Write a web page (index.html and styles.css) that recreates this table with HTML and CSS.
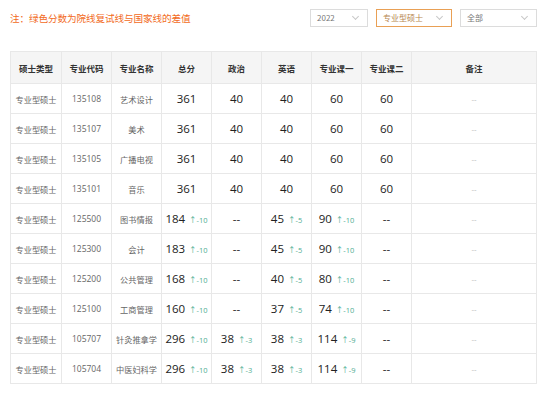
FILE: index.html
```html
<!DOCTYPE html>
<html lang="zh-CN">
<head>
  <meta charset="UTF-8" />
  <title>复试分数线</title>
  <link rel="stylesheet" href="styles.css">
</head>
<body>
  <div class="page">
    <div class="top-bar">
      <p class="notice">注：绿色分数为院线复试线与国家线的差值</p>
      <div class="filters">
        <div class="select year">2022<span class="arrow"></span></div>
        <div class="select type active">专业型硕士<span class="arrow"></span></div>
        <div class="select all">全部<span class="arrow"></span></div>
      </div>
    </div>

    <table class="score-table">
      <colgroup>
        <col class="c-sm"><col class="c-sm"><col class="c-sm"><col class="c-sm"><col class="c-sm">
        <col class="c-sm"><col class="c-sm"><col class="c-sm"><col>
      </colgroup>
      <thead>
        <tr>
          <th>硕士类型</th><th>专业代码</th><th>专业名称</th><th>总分</th><th>政治</th>
          <th>英语</th><th>专业课一</th><th>专业课二</th><th>备注</th>
        </tr>
      </thead>
      <tbody id="rows"></tbody>
    </table>
  </div>

  <script>
    const rows = [
      { code: "135108", name: "艺术设计", total: ["361"], pol: ["40"], eng: ["40"], s1: ["60"], s2: "60" },
      { code: "135107", name: "美术", total: ["361"], pol: ["40"], eng: ["40"], s1: ["60"], s2: "60" },
      { code: "135105", name: "广播电视", total: ["361"], pol: ["40"], eng: ["40"], s1: ["60"], s2: "60" },
      { code: "135101", name: "音乐", total: ["361"], pol: ["40"], eng: ["40"], s1: ["60"], s2: "60" },
      { code: "125500", name: "图书情报", total: ["184", "↑-10"], pol: null, eng: ["45", "↑-5"], s1: ["90", "↑-10"], s2: "--" },
      { code: "125300", name: "会计", total: ["183", "↑-10"], pol: null, eng: ["45", "↑-5"], s1: ["90", "↑-10"], s2: "--" },
      { code: "125200", name: "公共管理", total: ["168", "↑-10"], pol: null, eng: ["40", "↑-5"], s1: ["80", "↑-10"], s2: "--" },
      { code: "125100", name: "工商管理", total: ["160", "↑-10"], pol: null, eng: ["37", "↑-5"], s1: ["74", "↑-10"], s2: "--" },
      { code: "105707", name: "针灸推拿学", total: ["296", "↑-10"], pol: ["38", "↑-3"], eng: ["38", "↑-3"], s1: ["114", "↑-9"], s2: "--" },
      { code: "105704", name: "中医妇科学", total: ["296", "↑-10"], pol: ["38", "↑-3"], eng: ["38", "↑-3"], s1: ["114", "↑-9"], s2: "--" }
    ];

    function score(v) {
      if (!v) return `<td class="num">--</td>`;
      const diff = v[1] ? `<span class="diff">${v[1]}</span>` : "";
      return `<td class="num">${v[0]}${diff}</td>`;
    }

    const out = document.getElementById("rows");
    rows.forEach(r => {
      out.insertAdjacentHTML("beforeend", `<tr>
        <td class="txt">专业型硕士</td>
        <td class="code">${r.code}</td>
        <td class="txt">${r.name}</td>
        ${score(r.total)}${score(r.pol)}${score(r.eng)}${score(r.s1)}
        <td class="num">${r.s2}</td>
        <td class="note">--</td>
      </tr>`);
    });
  </script>
</body>
</html>
```

FILE: styles.css
```css
* { box-sizing: border-box; margin: 0; padding: 0; }
body {
  font-family: "Open Sans", "Noto Sans CJK SC", sans-serif;
  background: #fff;
  color: #333;
}
.page { padding: 9px 7px 0 10px; }

.top-bar {
  display: flex;
  justify-content: space-between;
  align-items: center;
  height: 18px;
  margin-bottom: 24px;
}
.notice {
  font-size: 9.6px;
  color: #f26a1b;
  font-family: "Noto Sans CJK SC", sans-serif;
  letter-spacing: -0.1px;
}
.filters { display: flex; gap: 8px; }
.select {
  position: relative;
  height: 18px;
  line-height: 16px;
  border: 1px solid #dcdcdc;
  padding-left: 6px;
  font-size: 8px;
  color: #777;
  font-family: "Noto Sans CJK SC", sans-serif;
}
.select.year { width: 58px; }
.select.type { width: 76px; }
.select.all { width: 77px; }
.select.active { border-color: #e9a055; color: #b7874f; }
.arrow {
  position: absolute;
  right: 9px; top: 4px;
  width: 5px; height: 5px;
  border-right: 1px solid #c8c8c8;
  border-bottom: 1px solid #c8c8c8;
  transform: rotate(45deg);
}

.score-table {
  width: 527px;
  border-collapse: collapse;
  table-layout: fixed;
}
.c-sm { width: 50px; }
.score-table col:first-child { width: 51px; }
th, td {
  border: 1px solid #e8e8e8;
  text-align: center;
  white-space: nowrap;
  padding: 0;
}
th {
  height: 32px;
  background: #f5f5f5;
  font-size: 8.5px;
  font-weight: 700;
  color: #333;
  font-family: "Noto Sans CJK SC", sans-serif;
}
td { height: 30px; }
td.txt {
  font-size: 8.2px;
  color: #666;
  font-family: "Noto Sans CJK SC", sans-serif;
}
td.code { font-size: 8.5px; color: #666; }
td.num { font-size: 11.5px; color: #222; }
.diff {
  font-size: 7.5px;
  color: #4fae93;
  margin-left: 4px;
}
td.note { font-size: 8px; color: #bbb; }
```
